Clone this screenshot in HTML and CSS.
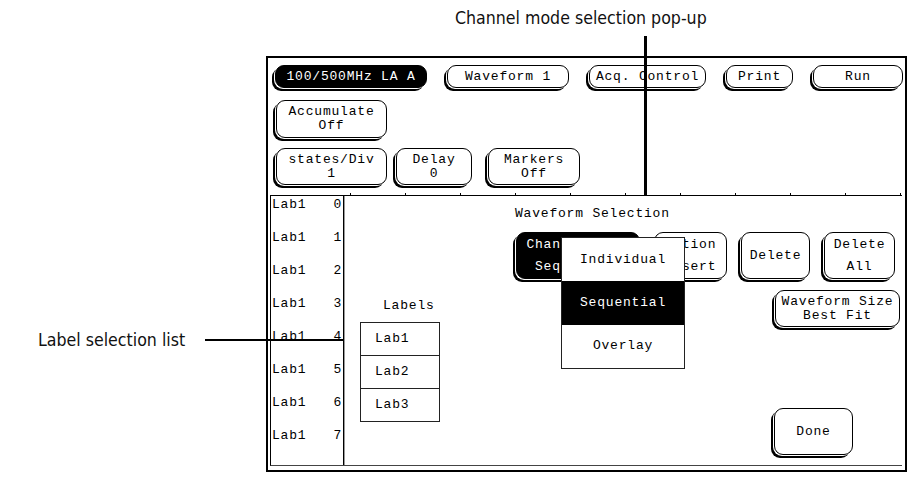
FILE: index.html
```html
<!DOCTYPE html>
<html lang="en">
<head>
    <meta charset="UTF-8">
    <meta name="viewport" content="width=device-width, initial-scale=1.0">
    <title>Waveform Selection</title>
    <link rel="stylesheet" href="styles.css">
</head>
<body>

<div class="page">
    <!-- callouts -->
    <div class="note note-top">Channel mode selection pop-up</div>
    <div class="lead lead-top"></div>
    <div class="note note-left">Label selection list</div>
    <div class="lead lead-left"></div>

    <div class="screen">
        <div class="bar-main">
            <div class="key key-dark w-mod">100/500MHz LA A</div>
            <div class="key w-wave">Waveform 1</div>
            <div class="key w-acq">Acq. Control</div>
            <div class="key w-print">Print</div>
            <div class="key w-run">Run</div>
        </div>

        <div class="bar-acc">
            <div class="key w-acc">Accumulate<br>Off</div>
        </div>

        <div class="bar-scale">
            <div class="key w-acc h-scale">states/Div<br>1</div>
            <div class="key w-delay h-scale">Delay<br>0</div>
            <div class="key w-markers h-scale">Markers<br>Off</div>
        </div>

        <div class="wave">
            <div class="labels">
                <div class="lab"><span>Lab1</span><span>0</span></div>
                <div class="lab"><span>Lab1</span><span>1</span></div>
                <div class="lab"><span>Lab1</span><span>2</span></div>
                <div class="lab"><span>Lab1</span><span>3</span></div>
                <div class="lab"><span>Lab1</span><span>4</span></div>
                <div class="lab"><span>Lab1</span><span>5</span></div>
                <div class="lab"><span>Lab1</span><span>6</span></div>
                <div class="lab"><span>Lab1</span><span>7</span></div>
            </div>

            <div class="dialog">
                <div class="dlg-title">Waveform Selection</div>
                <div class="dlg-body">
                    <div class="pick">
                        <div class="pick-head">Labels</div>
                        <div class="pick-list">
                            <div class="pick-item">Lab1</div>
                            <div class="pick-item">Lab2</div>
                            <div class="pick-item">Lab3</div>
                        </div>
                    </div>

                    <div class="dlg-keys">
                        <div class="dlg-row">
                            <div class="key key-dark tall w-chan">
                                <span>Chan<span class="under">nel Mode</span><br>Seq<span class="under">uential</span></span>
                                <div class="popup">
                                    <div class="popup-item">Individual</div>
                                    <div class="popup-item active">Sequential</div>
                                    <div class="popup-item">Overlay</div>
                                </div>
                            </div>
                            <div class="key tall w-ins"><span><span class="under">Ac</span>tion<br><span class="under">In</span>sert</span></div>
                            <div class="key tall w-del">Delete</div>
                            <div class="key tall w-delall">Delete<br>All</div>
                        </div>
                        <div class="key w-size">Waveform Size<br>Best Fit</div>
                        <div class="key tall w-done">Done</div>
                    </div>
                </div>
            </div>
        </div>
    </div>
</div>

</body>
</html>
```

FILE: styles.css
```css
body {
    margin: 0;
    background-color: #fff;
    color: #000;
    font-family: "Liberation Mono", "DejaVu Sans Mono", monospace;
}

.page {
    position: relative;
    box-sizing: border-box;
    width: 908px;
    height: 477px;
    padding: 56px 0 0 266px;
    overflow: hidden;
}

/* callout captions and leader lines */
.note {
    position: absolute;
    font-family: "Liberation Sans Narrow", "DejaVu Sans Condensed", "Liberation Sans", Arial, sans-serif;
    font-size: 17.6px;
    color: #111;
    white-space: nowrap;
}

.note-top {
    left: 455px;
    top: 8px;
}

.note-left {
    left: 38px;
    top: 330px;
}

.lead {
    position: absolute;
    background-color: #000;
}

.lead-top {
    left: 644px;
    top: 36px;
    width: 3px;
    height: 201px;
}

.lead-left {
    left: 205px;
    top: 339px;
    width: 156px;
    height: 2px;
}

/* instrument screen */
.screen {
    box-sizing: border-box;
    width: 641px;
    height: 416px;
    border: 2px solid #000;
    padding-top: 7px;
    font-size: 13px;
    letter-spacing: 0.8px;
}

.key {
    box-sizing: border-box;
    display: flex;
    align-items: center;
    justify-content: center;
    text-align: center;
    height: 23px;
    line-height: 14px;
    border: 1px solid #000;
    border-radius: 9px;
    background-color: #fff;
    box-shadow: -1px 1px 0 #fff, -3px 3px 0 #000;
    white-space: nowrap;
}

.key-dark {
    background-color: #000;
    color: #fff;
}

/* text that sits under the pop-up */
.under {
    visibility: hidden;
}

.bar-main {
    display: flex;
    gap: 20px;
    margin-left: 7px;
}

.w-mod { width: 152px; }
.w-wave { width: 122px; }
.w-acq { width: 117px; }
.w-print { width: 67px; }
.w-run { width: 90px; }

.bar-acc {
    margin: 12px 0 0 8px;
}

.w-acc {
    width: 111px;
    height: 38px;
}

.bar-scale {
    display: flex;
    gap: 9px;
    margin: 10px 0 0 8px;
}

.h-scale {
    height: 37px;
}

.w-delay { width: 76px; }
.w-markers {
    width: 92px;
    margin-left: 7px;
}

/* waveform area */
.wave {
    position: relative;
    box-sizing: border-box;
    display: flex;
    width: 632px;
    height: 271px;
    margin: 10px 0 0 2px;
    border-top: 1px solid #000;
    border-left: 1px solid #000;
    border-bottom: 1px solid #444;
}

.wave::before,
.wave::after {
    content: "";
    position: absolute;
    left: 79px;
    right: 0;
    height: 2px;
    background: repeating-linear-gradient(to right, #000 0 1px, transparent 1px 55px);
}

.wave::before {
    top: -3px;
}

.wave::after {
    bottom: 0;
}

.labels {
    width: 72px;
    border-right: 1px solid #000;
}

.lab {
    display: flex;
    justify-content: space-between;
    height: 33px;
    line-height: 18px;
    padding: 0 1px;
}

/* waveform selection dialog */
.dialog {
    flex: 1;
    position: relative;
    z-index: 1;
    background-color: #fff;
    border-left: 1px solid #999;
    padding-top: 7px;
}

.dlg-title {
    margin-left: 170px;
    line-height: 22px;
}

.dlg-body {
    display: flex;
    margin-top: 7px;
}

.pick {
    width: 80px;
    margin-left: 15px;
    padding-top: 64px;
}

.pick-head {
    line-height: 20px;
    padding-left: 23px;
}

.pick-list {
    margin-top: 6px;
    border: 1px solid #222;
}

.pick-item {
    height: 32px;
    line-height: 32px;
    padding-left: 14px;
}

.pick-item + .pick-item {
    border-top: 1px solid #222;
}

.dlg-keys {
    margin-left: 76px;
}

.dlg-row {
    display: flex;
    gap: 14px;
}

.tall {
    height: 47px;
    line-height: 22px;
}

.w-chan {
    position: relative;
    width: 124px;
}

.w-ins { width: 73px; }
.w-del { width: 69px; }
.w-delall { width: 71px; }

.w-size {
    width: 125px;
    height: 37px;
    margin: 11px 0 0 259px;
}

.w-done {
    width: 79px;
    margin: 81px 0 0 258px;
}

.popup {
    position: absolute;
    left: 44px;
    top: 4px;
    box-sizing: border-box;
    display: flex;
    flex-direction: column;
    width: 124px;
    height: 132px;
    border: 1px solid #222;
    background-color: #fff;
    color: #000;
    z-index: 2;
}

.popup-item {
    flex: 1;
    display: flex;
    align-items: center;
    justify-content: center;
}

.popup-item.active {
    background-color: #000;
    color: #fff;
}
```
